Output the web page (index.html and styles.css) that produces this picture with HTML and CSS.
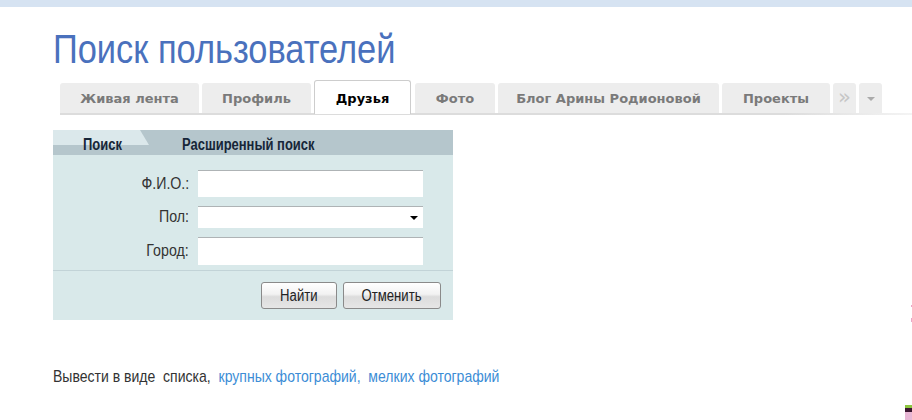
FILE: index.html
```html
<!DOCTYPE html>
<html lang="ru">
<head>
<meta charset="utf-8">
<title>Поиск пользователей</title>
<link rel="stylesheet" href="styles.css">
</head>
<body>
<div class="topbar"></div>
<div class="page">
  <h1 class="title"><span class="nw t-scale">Поиск пользователей</span></h1>
  <div class="tabs">
    <a class="tab w1">Живая лента</a>
    <a class="tab w2">Профиль</a>
    <a class="tab active w3">Друзья</a>
    <a class="tab w4">Фото</a>
    <a class="tab w5">Блог Арины Родионовой</a>
    <a class="tab w6">Проекты</a>
    <a class="tab small more">&#8250;&#8250;</a>
    <a class="tab small drop"><span class="caret"></span></a>
  </div>
  <div class="tabline"></div>

  <div class="panel">
    <div class="phead">
      <span class="ptab nw h-scale">Поиск</span>
      <span class="ptab2 nw h-scale">Расширенный поиск</span>
    </div>
    <div class="form">
      <label class="lbl"><span class="nwr l-scale">Ф.И.О.:</span></label>
      <div class="field f1"></div>
      <label class="lbl"><span class="nwr l-scale">Пол:</span></label>
      <div class="field f2"><span class="sel-caret"></span></div>
      <label class="lbl"><span class="nwr l-scale">Город:</span></label>
      <div class="field f3"></div>
    </div>
    <div class="sep"></div>
    <div class="buttons">
      <button class="btn b1"><span class="nwc">Найти</span></button>
      <button class="btn b2"><span class="nwc">Отменить</span></button>
    </div>
  </div>

  <p class="view"><span class="nw v-scale">Вывести в виде&nbsp; списка,&nbsp; <a class="lnk">крупных фотографий,</a>&nbsp; <a class="lnk">мелких фотографий</a></span></p>
</div>
<div class="corner"></div>
<div class="dots"></div>
</body>
</html>
```
FILE: styles.css
```css
html, body {
  margin: 0;
  padding: 0;
  background: #fff;
  width: 912px;
  height: 420px;
  overflow: hidden;
  position: relative;
}
body {
  font-family: "Liberation Sans", Arial, sans-serif;
  color: #333;
}
.nw, .nwr, .nwc {
  display: inline-block;
  transform: scaleX(0.82);
  transform-origin: left center;
  white-space: nowrap;
}
.nwr { transform-origin: right center; }
.nwc { transform-origin: center center; }
.t-scale { transform: scaleX(0.86); }
.h-scale { transform: scaleX(0.81); }
.l-scale { transform: scaleX(0.835); }
.v-scale { transform: scaleX(0.825); }

.topbar {
  height: 7px;
  background: #d6e3f2;
}
.page {
  padding-left: 53px;
}
.title {
  margin: 19px 0 0 0;
  font-weight: normal;
  font-size: 40px;
  line-height: 46px;
  color: #4a71bd;
}
.tabs {
  display: flex;
  align-items: flex-end;
  gap: 3px;
  height: 33px;
  margin: 8px 0 0 7px;
  font-family: "DejaVu Sans", Verdana, sans-serif;
  position: relative;
  z-index: 1;
}
.tab {
  display: flex;
  align-items: center;
  justify-content: center;
  height: 30px;
  box-sizing: border-box;
  background: #ededed;
  border-radius: 3px 3px 0 0;
  font-size: 13px;
  font-weight: bold;
  color: #7a7a7a;
  padding-top: 1px;
}
.tab.active {
  height: 34px;
  background: #fff;
  border: 1px solid #cdcdcd;
  border-bottom: none;
  color: #000;
  margin-bottom: -1px;
}
.w1 { width: 139px; }
.w2 { width: 109px; }
.w3 { width: 97px; }
.w4 { width: 80px; margin-left: 1px; }
.w5 { width: 221px; }
.w6 { width: 108px; }
.small { width: 23px; }
.more {
  color: #c6c6c6;
  font-size: 21px;
  font-weight: normal;
  letter-spacing: -4px;
  padding: 0 4px 3px 0;
}
.caret {
  width: 0; height: 0;
  border-left: 4px solid transparent;
  border-right: 4px solid transparent;
  border-top: 4px solid #aaa;
}
.tabline {
  height: 2px;
  margin-left: 7px;
  background: linear-gradient(to right, #dcdcdc 0%, #dcdcdc 85%, #f4f4f4 100%);
}

.panel {
  margin-top: 15px;
  width: 400px;
  height: 190px;
  background: #d9e9ea;
  box-sizing: border-box;
}
.phead {
  position: relative;
  height: 25px;
  background: #b5c6cc;
  display: flex;
  align-items: flex-end;
  font-size: 16px;
  font-weight: bold;
  color: #172638;
  line-height: 18px;
  padding-bottom: 1px;
  box-sizing: border-box;
}
.phead::before {
  content: "";
  position: absolute;
  left: 0; top: 0;
  width: 96px;
  height: 15px;
  background: #dbe8eb;
  clip-path: polygon(0 0, 87px 0, 96px 15px, 0 15px);
}
.ptab, .ptab2 { position: relative; }
.ptab { margin-left: 30px; width: 99px; }
.ptab2 { margin-left: 0; }

.form {
  display: grid;
  grid-template-columns: 136px 225px;
  column-gap: 9px;
  row-gap: 9px;
  margin-top: 15px;
  align-items: center;
}
.lbl {
  text-align: right;
  font-size: 17px;
  color: #333;
}
.field {
  background: #fff;
  border-top: 1px solid #aeb3b5;
  box-sizing: border-box;
  position: relative;
}
.f1 { height: 27px; }
.f2 { height: 22px; }
.f3 { height: 28px; }
.sel-caret {
  position: absolute;
  right: 5px; top: 9px;
  width: 0; height: 0;
  border-left: 4px solid transparent;
  border-right: 4px solid transparent;
  border-top: 4px solid #000;
}
.sep {
  height: 1px;
  background: #c2d3d7;
  margin-top: 5px;
}
.buttons {
  display: flex;
  justify-content: flex-end;
  gap: 6px;
  padding: 11px 12px 0 0;
}
.btn {
  height: 27px;
  border: 1px solid #8a8a8a;
  border-radius: 3px;
  background: linear-gradient(to bottom, #ffffff 0%, #f2f2f2 45%, #dcdcdc 55%, #e6e6e6 100%);
  font-family: "Liberation Sans", Arial, sans-serif;
  font-size: 16px;
  color: #222;
  padding: 0;
}
.b1 { width: 76px; }
.b2 { width: 98px; }

.view {
  margin: 47px 0 0 0;
  font-size: 17px;
  color: #333;
  line-height: 20px;
}
.lnk { color: #3c8dd6; }

.corner {
  position: absolute;
  right: 0; bottom: 0;
  width: 7px; height: 15px;
  background: linear-gradient(to bottom, #8cc63f 0, #8cc63f 3px, #3a1630 3px, #3a1630 7px, #e7b6d4 7px);
}
.dots {
  position: absolute;
  right: 0; top: 305px;
  width: 1px; height: 17px;
  background: linear-gradient(to bottom, #e9a7c8 0, #e9a7c8 2px, transparent 2px, transparent 13px, #e9a7c8 13px);
}
```
